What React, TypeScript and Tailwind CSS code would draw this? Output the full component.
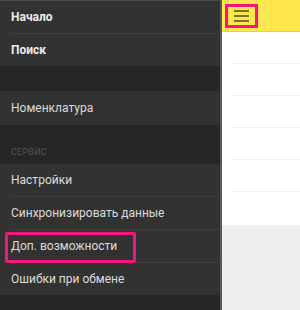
import { Fragment } from 'react';

const topItems = ['Начало', 'Поиск'];
const serviceItems = ['Настройки', 'Синхронизировать данные', 'Доп. возможности', 'Ошибки при обмене'];

function MenuRow({ label, bold, highlight }: { label: string; bold?: boolean; highlight?: boolean }) {
  return (
    <div className="h-[32px] flex items-center pl-[11px] relative">
      <span className={bold ? 'font-bold text-[#ececec]' : 'text-[#dcdcdc]'}>{label}</span>
      {highlight && (
        <div className="absolute left-[5px] top-[2px] w-[131px] h-[31px] border-[3px] border-[#f5157d] rounded-[2px]" />
      )}
    </div>
  );
}

function Divider() {
  return <div className="h-px ml-[10px] bg-[#3d3d3d]" />;
}

export default function App() {
  return (
    <div className="w-[300px] h-[310px] flex overflow-hidden text-[12px] font-['Roboto',sans-serif]">
      {/* Drawer */}
      <aside className="w-[222px] h-full bg-[#323232] border-t border-[#4a4a4a] border-r-2 border-r-[#5a5a5a] flex flex-col">
        {topItems.map((item, i) => (
          <Fragment key={item}>
            {i > 0 && <Divider />}
            <MenuRow label={item} bold />
          </Fragment>
        ))}
        <div className="h-[25px] bg-[#262626]" />
        <div className="h-[34px] flex items-center pl-[11px] text-[#dcdcdc]">Номенклатура</div>
        <div className="h-[39px] bg-[#262626] flex items-end pl-[11px] pb-[5px] text-[9px] text-[#555] tracking-wide">
          СЕРВИС
        </div>
        {serviceItems.map((item, i) => (
          <Fragment key={item}>
            {i > 0 && <Divider />}
            <MenuRow label={item} highlight={item === 'Доп. возможности'} />
          </Fragment>
        ))}
        <div className="flex-1 bg-[#262626]" />
      </aside>

      {/* Content */}
      <main className="flex-1 flex flex-col">
        <div className="h-[32px] bg-[#fde84e] border-b border-[#e6d347] flex items-center pl-[3px]">
          <div className="w-[33px] h-[24px] border-[3px] border-[#f5157d] flex flex-col items-center justify-center gap-[3px]">
            <span className="w-[15px] h-[2px] bg-[#7d7226]" />
            <span className="w-[15px] h-[2px] bg-[#7d7226]" />
            <span className="w-[15px] h-[2px] bg-[#7d7226]" />
          </div>
        </div>
        <div className="h-[193px] bg-white flex flex-col">
          {[0, 1, 2, 3, 4].map((i) => (
            <div key={i} className="h-[32px] border-b border-[#f0f0f0] ml-[10px]" />
          ))}
        </div>
        <div className="flex-1 bg-[#efefef]" />
      </main>
    </div>
  );
}
